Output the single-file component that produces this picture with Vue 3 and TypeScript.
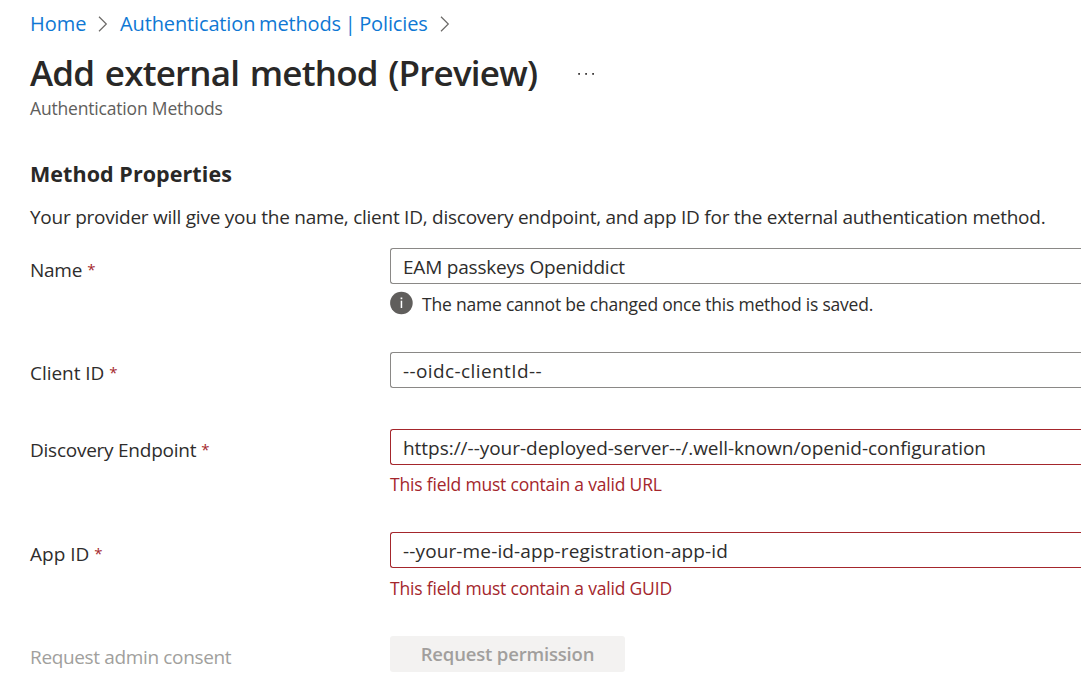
<script setup lang="ts">
interface Field {
  id: string
  label: string
  value: string
  note?: string
  error?: string
}

const fields: Field[] = [
  {
    id: 'name',
    label: 'Name',
    value: 'EAM passkeys Openiddict',
    note: 'The name cannot be changed once this method is saved.',
  },
  { id: 'client', label: 'Client ID', value: '--oidc-clientId--' },
  {
    id: 'endpoint',
    label: 'Discovery Endpoint',
    value: 'https://--your-deployed-server--/.well-known/openid-configuration',
    error: 'This field must contain a valid URL',
  },
  {
    id: 'app',
    label: 'App ID',
    value: '--your-me-id-app-registration-app-id',
    error: 'This field must contain a valid GUID',
  },
]
</script>

<template>
  <main class="page">
    <nav class="breadcrumb">
      <a class="home">Home</a>
      <svg class="chevron" width="10" height="16" viewBox="0 0 10 16">
        <path d="M1 0.8 8.3 8 1 15.2" />
      </svg>
      <a class="policies">Authentication methods | Policies</a>
      <svg class="chevron" width="10" height="16" viewBox="0 0 10 16">
        <path d="M1 0.8 8.3 8 1 15.2" />
      </svg>
    </nav>

    <header class="heading">
      <h1>Add external method (Preview)</h1>
      <svg class="more" width="20" height="4" viewBox="0 0 20 4">
        <rect x="1.2" y="1" width="1.8" height="1.8" />
        <rect x="8.2" y="1" width="1.8" height="1.8" />
        <rect x="15.2" y="1" width="1.8" height="1.8" />
      </svg>
    </header>
    <p class="subtitle">Authentication Methods</p>

    <h2>Method Properties</h2>
    <p class="intro">
      Your provider will give you the name, client ID, discovery endpoint, and app ID for the external authentication method.
    </p>

    <form class="form">
      <div v-for="f in fields" :key="f.id" class="row" :class="f.id">
        <div class="label"><span class="label-text">{{ f.label }}</span><span class="star">*</span></div>
        <div class="control">
          <div class="box" :class="{ invalid: f.error }"><span class="value">{{ f.value }}</span></div>
          <div v-if="f.note" class="note">
            <svg width="24" height="24" viewBox="0 0 24 24">
              <circle cx="11.4" cy="12" r="11.3" fill="#605e5c" />
              <rect x="10.7" y="9.7" width="1.5" height="7.3" fill="#fff" />
              <rect x="10.6" y="6.5" width="1.7" height="1.7" fill="#fff" />
            </svg>
            <span class="note-text">{{ f.note }}</span>
          </div>
          <div v-if="f.error" class="error">{{ f.error }}</div>
        </div>
      </div>
      <div class="row consent">
        <div class="label"><span class="label-text">Request admin consent</span></div>
        <div class="control">
          <button type="button" class="button" disabled>Request permission</button>
        </div>
      </div>
    </form>
  </main>
</template>

<style>
html,
body {
  overflow: hidden;
  background: #fff;
}
</style>

<style scoped>
.page {
  box-sizing: border-box;
  height: 691px;
  padding-left: 30px;
  overflow: hidden;
  background: #fff;
  color: #2e2d2c;
  font: 400 19px/26px "Open Sans", "Noto Sans", sans-serif;
  white-space: nowrap;
}
h1,
h2,
p {
  margin: 0;
}
.breadcrumb {
  display: flex;
  align-items: center;
  height: 47px;
  font-size: 20px;
  color: #0f78d4;
}
.home {
  width: 68px;
  letter-spacing: 0.02px;
}
.policies {
  width: 320px;
  margin-left: 12px;
  letter-spacing: -0.13px;
  word-spacing: -1.4px;
}
.chevron {
  flex: none;
  fill: none;
  stroke: #6b6967;
  stroke-width: 1.2;
}
.heading {
  display: flex;
  align-items: center;
  height: 44px;
  margin-top: 4px;
}
h1 {
  width: 547px;
  color: #292827;
  font-size: 35px;
  font-weight: 600;
  line-height: 44px;
  letter-spacing: -0.8px;
  word-spacing: 2.2px;
}
.more {
  margin-top: 1px;
  fill: #403e3d;
}
.subtitle {
  margin-top: 1px;
  font-size: 17.5px;
  line-height: 24px;
  letter-spacing: -0.18px;
  color: #605e5c;
}
h2 {
  margin: 39px 0 0;
  color: #292827;
  font-size: 21.5px;
  font-weight: 700;
  line-height: 30px;
  letter-spacing: 0.06px;
}
.intro {
  margin-top: 15px;
  letter-spacing: -0.25px;
}
.form {
  margin-top: 18px;
}
.row {
  display: grid;
  grid-template-columns: 360px 1fr;
  height: 104px;
}
.row.client {
  height: 77px;
}
.row.endpoint {
  height: 103px;
}
.label {
  padding-top: 8px;
}
.name .label,
.app .label {
  padding-top: 9px;
}
.name .label-text {
  letter-spacing: -0.25px;
}
.client .label-text {
  letter-spacing: -0.05px;
}
.endpoint .label-text {
  letter-spacing: -0.25px;
}
.star {
  margin-left: 5px;
  font-size: 15px;
  line-height: 1;
  vertical-align: 2px;
  color: #a4262c;
}
.box {
  box-sizing: border-box;
  height: 36px;
  padding: 1px 0 0 12px;
  border: 1px solid #8a8886;
  border-right: 0;
  border-radius: 3px 0 0 3px;
  line-height: 34px;
}
.box.invalid {
  border-color: #a4262c;
}
.name .value {
  letter-spacing: -0.2px;
}
.client .value {
  letter-spacing: 0.4px;
}
.endpoint .value {
  letter-spacing: -0.03px;
}
.app .value {
  letter-spacing: 0.13px;
}
.note {
  display: flex;
  align-items: center;
  height: 24px;
  margin-top: 7px;
}
.note-text {
  margin: 2px 0 0 8px;
  font-size: 17.5px;
  line-height: 24px;
  letter-spacing: -0.21px;
}
.error {
  margin-top: 7px;
  font-size: 17.5px;
  line-height: 24px;
  letter-spacing: -0.19px;
  color: #a4262c;
}
.app .error {
  margin-top: 8px;
}
.consent {
  color: #a19f9d;
}
.consent .label-text {
  letter-spacing: -0.35px;
}
.button {
  display: block;
  width: 235px;
  height: 36px;
  padding: 0;
  border: 0;
  border-radius: 3px;
  background: #f3f2f1;
  color: #a19f9d;
  font: 600 18.5px/36px "Open Sans", "Noto Sans", sans-serif;
  letter-spacing: -0.17px;
}
</style>
